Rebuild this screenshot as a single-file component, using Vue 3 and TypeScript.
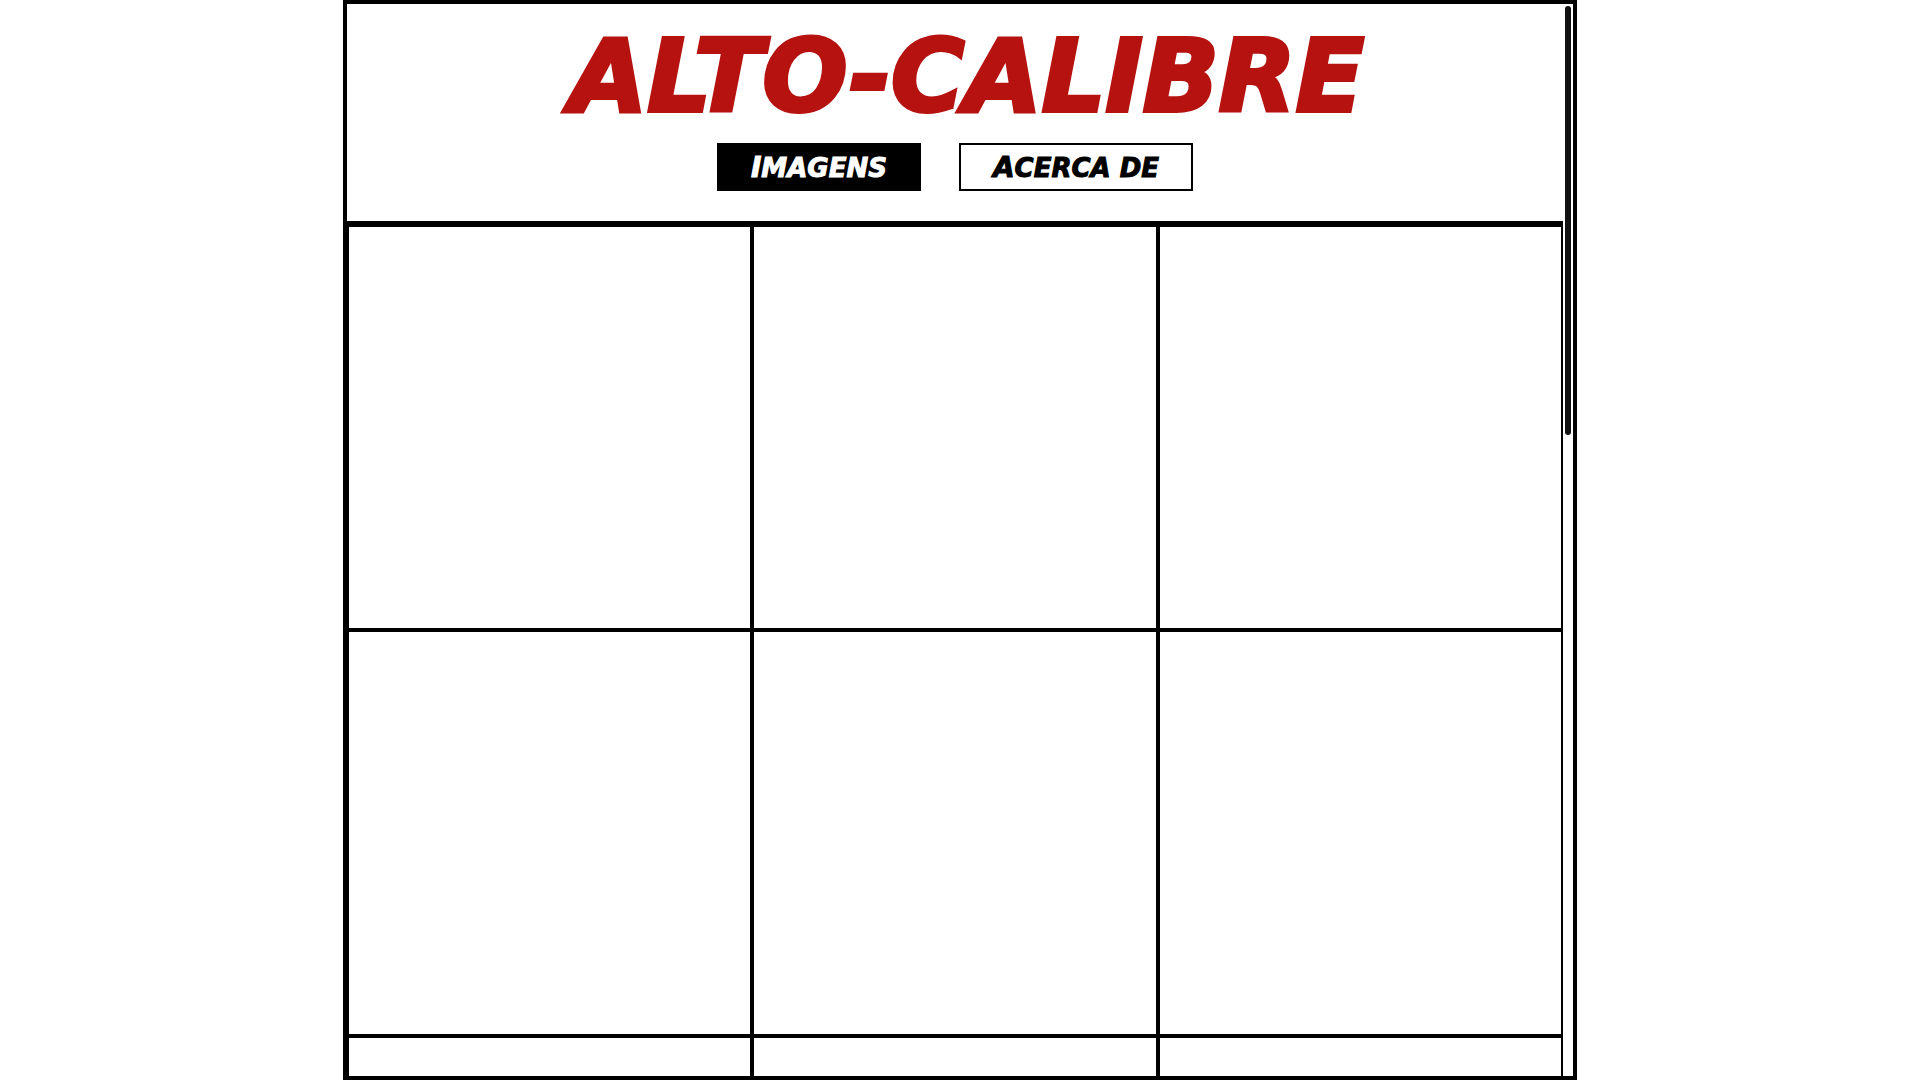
<script setup lang="ts">
import { onBeforeUnmount, onMounted, ref } from 'vue'

interface Tab {
  id: string
  label: string
}

const tabs: Tab[] = [
  { id: 'imagens', label: 'Imagens' },
  { id: 'acerca', label: 'Acerca de' },
]
const active = ref('imagens')
const tiles = 18

const scroller = ref<HTMLElement | null>(null)
const thumbHeight = ref(40)
const thumbTop = ref(0)

// Keeps the thumb in step with the scrolled content, in percent of the track.
function syncThumb(): void {
  const el = scroller.value
  if (!el) return
  thumbHeight.value = (el.clientHeight / el.scrollHeight) * 100
  thumbTop.value = (el.scrollTop / el.scrollHeight) * 100
}

onMounted(() => {
  syncThumb()
  window.addEventListener('resize', syncThumb)
})
onBeforeUnmount(() => window.removeEventListener('resize', syncThumb))
</script>

<template>
  <div class="frame">
    <div ref="scroller" class="scroller" @scroll="syncThumb">
      <header class="header">
        <h1 class="title">ALTO-CALIBRE</h1>
        <nav class="tabs">
          <a
            v-for="tab in tabs"
            :key="tab.id"
            class="tab"
            :class="{ active: active === tab.id }"
            :href="'#' + tab.id"
            @click.prevent="active = tab.id"
            >{{ tab.label }}</a
          >
        </nav>
      </header>
      <main class="grid">
        <div v-for="n in tiles" :key="n" class="tile"></div>
      </main>
    </div>
    <div class="track">
      <div class="thumb" :style="{ height: thumbHeight + '%', top: thumbTop + '%' }"></div>
    </div>
  </div>
</template>

<style>
body {
  margin: 0;
  background: #fff;
}
</style>

<style scoped>
.frame {
  box-sizing: border-box;
  display: flex;
  width: 100%;
  max-width: 1234px;
  height: 100vh;
  margin: 0 auto;
  border: 4px solid #000;
  background: #fff;
  font-family: 'DejaVu Sans', 'Open Sans', sans-serif;
}
.scroller {
  flex: 1;
  min-width: 0;
  overflow-y: auto;
  scrollbar-width: none;
}
.header {
  display: flex;
  flex-direction: column;
  align-items: center;
  padding-bottom: 30px;
  border-bottom: 4px solid #000;
}
.title {
  margin: 0;
  padding: 23px 0 16px 24px;
  color: #b51210;
  font-size: 100px;
  font-style: italic;
  font-weight: 700;
  line-height: 100px;
  white-space: nowrap;
  -webkit-text-stroke: 4px #b51210;
}
.tabs {
  display: flex;
  gap: 38px;
}
.tab {
  display: block;
  box-sizing: border-box;
  height: 48px;
  padding: 0 32px;
  border: 2px solid #000;
  background: #fff;
  color: #000;
  font-size: 26px;
  font-style: italic;
  font-weight: 700;
  line-height: 46px;
  text-decoration: none;
  text-transform: uppercase;
  white-space: nowrap;
  -webkit-text-stroke: 1px currentColor;
}
.tab::first-letter {
  font-size: 28px;
}
.tab.active {
  background: #000;
  color: #fff;
}
.grid {
  display: grid;
  grid-template-columns: repeat(3, 1fr);
}
.tile {
  box-sizing: border-box;
  aspect-ratio: 1;
  border: 2px solid #000;
}
.track {
  position: relative;
  flex: none;
  width: 10px;
}
.thumb {
  position: absolute;
  left: 0;
  box-sizing: border-box;
  width: 10px;
  border: 2px solid transparent;
  border-radius: 5px;
  background: #111;
  background-clip: padding-box;
}
</style>
